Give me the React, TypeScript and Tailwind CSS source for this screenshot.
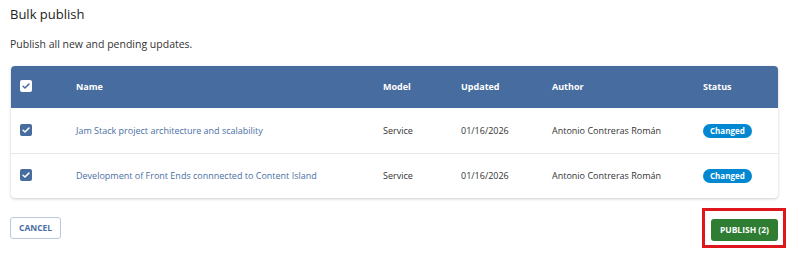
const rows = [
  { name: "Jam Stack project architecture and scalability", model: "Service", updated: "01/16/2026", author: "Antonio Contreras Román", status: "Changed" },
  { name: "Development of Front Ends connnected to Content Island", model: "Service", updated: "01/16/2026", author: "Antonio Contreras Román", status: "Changed" },
];

function Check({ inverted }: { inverted?: boolean }) {
  return (
    <span
      className={`inline-flex h-[12px] w-[12px] items-center justify-center rounded-[2px] ${
        inverted ? "bg-white" : "bg-[#476c9f]"
      }`}
    >
      <svg viewBox="0 0 24 24" className="h-[10px] w-[10px]" fill="none" stroke={inverted ? "#476c9f" : "#ffffff"} strokeWidth="3.5" strokeLinecap="round" strokeLinejoin="round">
        <path d="M5 12.5l4.5 4.5L19 7.5" />
      </svg>
    </span>
  );
}

export default function App() {
  return (
    <div className="h-[257px] w-[800px] bg-white font-['Open_Sans',sans-serif] text-[#333]">
      <h1 className="px-[10px] pt-[5px] text-[13px] leading-[18px] text-[#222]">Bulk publish</h1>
      <p className="mt-[14px] px-[10px] text-[10.5px] leading-[14px] text-[#333]">Publish all new and pending updates.</p>

      <div className="mx-[11px] mt-[15px] w-[767px] overflow-hidden rounded-[4px] bg-white shadow-[0_1px_3px_rgba(0,0,0,0.2)]">
        <div className="grid h-[42px] grid-cols-[65px_307px_78px_91px_151px_1fr] items-center bg-[#476c9f] text-[9px] font-bold text-white">
          <div className="pl-[9px] pt-[1px]"><Check inverted /></div>
          <div>Name</div>
          <div>Model</div>
          <div>Updated</div>
          <div>Author</div>
          <div>Status</div>
        </div>
        {rows.map((r, i) => (
          <div
            key={i}
            className={`grid h-[45px] grid-cols-[65px_307px_78px_91px_151px_1fr] items-center text-[9px] ${
              i > 0 ? "border-t border-[#e8e8e8]" : ""
            }`}
          >
            <div className="pl-[9px] pt-[1px]"><Check /></div>
            <div className="text-[#4a6fa5]">{r.name}</div>
            <div>{r.model}</div>
            <div>{r.updated}</div>
            <div>{r.author}</div>
            <div>
              <span className="inline-flex h-[14px] items-center rounded-full bg-[#0288d1] px-[7px] text-[8px] font-bold text-white">
                {r.status}
              </span>
            </div>
          </div>
        ))}
      </div>

      <div className="mt-[10px] flex items-center justify-between pl-[10px] pr-[14px]">
        <button className="h-[22px] rounded-[3px] border border-[#b9c9e0] px-[8px] text-[8.5px] font-bold text-[#4a6fa5]">
          CANCEL
        </button>
        <div className="border-[3px] border-[#e0161e] py-[4px] pl-[6px] pr-[5px]">
          <button className="h-[22px] rounded-[3px] bg-[#2e7d32] px-[9px] text-[8.5px] font-bold text-white">
            PUBLISH (2)
          </button>
        </div>
      </div>
    </div>
  );
}
